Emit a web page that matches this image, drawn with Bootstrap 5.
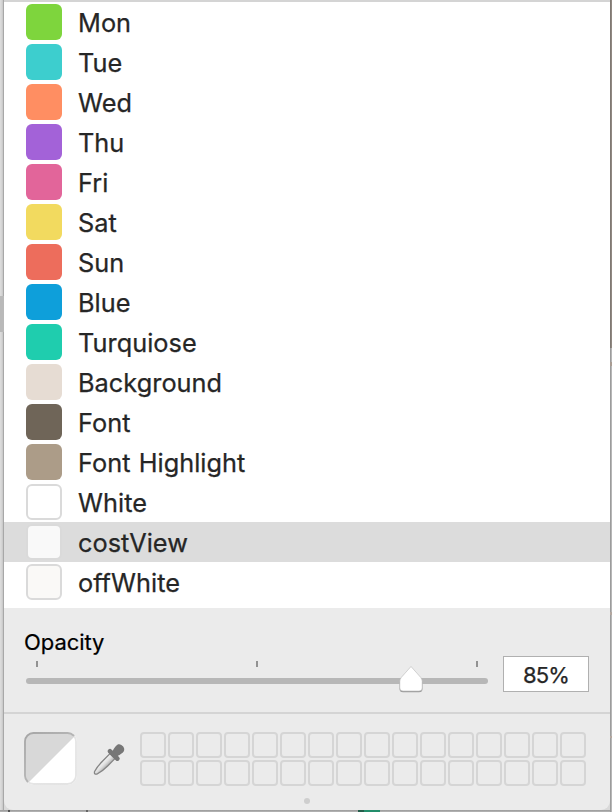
<!DOCTYPE html>
<html lang="en">
<head>
<meta charset="utf-8">
<meta name="viewport" content="width=device-width, initial-scale=1">
<title>Colors</title>
<link href="https://cdn.jsdelivr.net/npm/bootstrap@5.3.0/dist/css/bootstrap.min.css" rel="stylesheet">
<style>
html, body { height: 812px; overflow: hidden; }
body { width: 612px; background: #d9d9d9; font-family: Inter, "Open Sans", sans-serif; color: #262626; }
.desktop { height: 812px; padding: 0 2px 2px 4px;
  background:
    linear-gradient(#b9b9b9,#b9b9b9) 0 296px/4px 36px no-repeat,
    linear-gradient(#a99c92,#a99c92) 610px 362px/2px 4px no-repeat,
    linear-gradient(#b3a69e,#b3a69e) 610px 612px/2px 3px no-repeat,
    linear-gradient(#b3a69e,#b3a69e) 610px 736px/2px 2px no-repeat,
    linear-gradient(90deg,#77716c,#999189) 610px 0/2px 348px no-repeat,
    linear-gradient(90deg,#8f8f8f,#c4c4c4) 610px 348px/2px 464px no-repeat,
    linear-gradient(#555,#555) 8px 810px/2px 2px no-repeat,
    linear-gradient(#666,#666) 86px 810px/2px 2px no-repeat,
    linear-gradient(90deg,#245e4b 6px,#238d6b 6px) 358px 810px/22px 2px no-repeat,
    linear-gradient(#999,#b8b8b8) 0 810px/612px 2px no-repeat,
    linear-gradient(90deg,#dedede 0,#d2d2d2 2px,#c4c4c4 3px,#a8a8a8 3px,#a8a8a8 4px,transparent 4px);
}
.panel { height: 810px; background: #ebebeb; border-radius: 0 0 9px 9px; overflow: hidden; }
.color-list { height: 608px; background: #fff; border-top: 2px solid #d4d4d4; }
.color-row { height: 40px; padding-left: 22px; font-size: 25.3px; line-height: 40px; letter-spacing: .04px; word-spacing: 1px; }
.color-row.selected { background: #dcdcdc; }
.swatch { width: 36px; height: 36px; border-radius: 6px; margin-right: 16px; background: var(--c); }
.swatch.outlined { border: 2px solid #dadada; }
.color-name { position: relative; top: 1px; white-space: nowrap; -webkit-text-stroke: .25px currentColor; }
.opacity-area { height: 106px; padding: 19px 21px 0 20px; border-bottom: 2px solid #d4d4d4; }
.opacity-title { font-size: 22px; line-height: 30px; color: #000; letter-spacing: -.05px; -webkit-text-stroke: .2px currentColor; }
.slider { display: block; margin: -2px 0 0 0; }
.value-box { width: 86px; height: 36px; margin-top: -1px; background: #fff; border: 1px solid #b0b0b0; font-size: 22px; line-height: 36px; letter-spacing: -.8px; -webkit-text-stroke: .25px currentColor; }
.tools { height: 76px; padding: 18px 24px 0 18px; }
.tool-icons { width: 118px; height: 58px; }
.favorites { display: grid; grid-template-columns: repeat(16, 26px); gap: 2px; align-content: start; }
.favorites span { height: 26px; border: 2px solid #d5d5d5; border-radius: 4px; }
.handle { width: 6px; height: 6px; background: #cecece; margin: 8px auto 0; }
</style>
</head>
<body>
<div class="desktop">
<main class="panel">
  <div class="color-list">
    <div class="color-row d-flex align-items-center"><span class="swatch" style="--c:#7ed53d"></span><span class="color-name">Mon</span></div>
    <div class="color-row d-flex align-items-center"><span class="swatch" style="--c:#3dcece"></span><span class="color-name">Tue</span></div>
    <div class="color-row d-flex align-items-center"><span class="swatch" style="--c:#ff8e62"></span><span class="color-name">Wed</span></div>
    <div class="color-row d-flex align-items-center"><span class="swatch" style="--c:#a362d8"></span><span class="color-name">Thu</span></div>
    <div class="color-row d-flex align-items-center"><span class="swatch" style="--c:#e2659a"></span><span class="color-name">Fri</span></div>
    <div class="color-row d-flex align-items-center"><span class="swatch" style="--c:#f2da5f"></span><span class="color-name">Sat</span></div>
    <div class="color-row d-flex align-items-center"><span class="swatch" style="--c:#ed6d5c"></span><span class="color-name">Sun</span></div>
    <div class="color-row d-flex align-items-center"><span class="swatch" style="--c:#0e9fda"></span><span class="color-name">Blue</span></div>
    <div class="color-row d-flex align-items-center"><span class="swatch" style="--c:#1fcdae"></span><span class="color-name">Turquiose</span></div>
    <div class="color-row d-flex align-items-center"><span class="swatch" style="--c:#e6dcd3"></span><span class="color-name">Background</span></div>
    <div class="color-row d-flex align-items-center"><span class="swatch" style="--c:#6f6558"></span><span class="color-name">Font</span></div>
    <div class="color-row d-flex align-items-center"><span class="swatch" style="--c:#ac9c88"></span><span class="color-name">Font Highlight</span></div>
    <div class="color-row d-flex align-items-center"><span class="swatch outlined" style="--c:#ffffff"></span><span class="color-name">White</span></div>
    <div class="color-row selected d-flex align-items-center"><span class="swatch outlined" style="--c:#f9f9f9"></span><span class="color-name">costView</span></div>
    <div class="color-row d-flex align-items-center"><span class="swatch outlined" style="--c:#faf9f7"></span><span class="color-name">offWhite</span></div>
  </div>
  <section class="opacity-area">
    <div class="opacity-title">Opacity</div>
    <div class="d-flex justify-content-between">
      <svg class="slider" width="470" height="44" viewBox="24 655 470 44" role="img" aria-label="Opacity 85%">
        <path d="M36 661h2v6h-2zM256 661h2v6h-2zM476 661h2v6h-2z" fill="#929292"/>
        <rect x="26" y="678" width="462" height="6" rx="3" fill="#b7b7b7"/>
        <path d="M411 667L421 677.800Q422.500 679.500 422.500 681.500V688Q422.500 691.500 419 691.500H403Q399.500 691.500 399.500 688V681.500Q399.500 679.500 401 677.800Z" fill="#9b9b9b" transform="translate(0 .7)"/>
        <path d="M411 666.500L420.800 677.500Q422.200 679.500 422.200 681.500V688Q422.200 691 419 691H403Q399.800 691 399.800 688V681.500Q399.800 679.500 401.200 677.500Z" fill="#fff" stroke="#b9b9b9" stroke-width=".6"/>
      </svg>
      <div class="value-box text-center">85%</div>
    </div>
  </section>
  <section class="tools d-flex">
    <svg class="tool-icons flex-shrink-0" viewBox="22 732 118 58" aria-hidden="true">
      <defs>
        <clipPath id="well"><rect x="24" y="732" width="53" height="53" rx="9.500"/></clipPath>
        <linearGradient id="rim" x1="0" y1="0" x2="1" y2="1"><stop offset="0" stop-color="#a6a6a6"/><stop offset=".5" stop-color="#b5b5b5"/><stop offset=".52" stop-color="#e5e5e5"/><stop offset="1" stop-color="#e3e3e3"/></linearGradient>
        <linearGradient id="glass" x1="0" y1="0" x2="1" y2="0"><stop offset="0" stop-color="#f4f4f4"/><stop offset=".5" stop-color="#e0e0e0"/><stop offset="1" stop-color="#b0b0b0"/></linearGradient>
      </defs>
      <g clip-path="url(#well)">
        <path d="M24 732h53v53h-53z" fill="#fff"/>
        <path d="M24 732h53v2L26 785h-2z" fill="#d8d8d8"/>
      </g>
      <rect x="25" y="733" width="51" height="51" rx="8.500" fill="none" stroke="url(#rim)" stroke-width="1.800"/>
      <g transform="translate(94.800 773.800) rotate(45)">
        <path d="M-3.500 -25H3.500V-15C3.500 -9 2.800 -5 1.800 -1.500Q0 1.500 -1.800 -1.500C-2.800 -5 -3.500 -9 -3.500 -15Z" fill="url(#glass)" stroke="#858585" stroke-width="1.300"/>
        <path d="M-5.500 -29H-3.600C-4.400 -31.500 -5 -34 -4.600 -36.500C-3.500 -40.300 3.500 -40.300 4.600 -36.500C5 -34 4.400 -31.500 3.600 -29H5.500Q7.500 -29 7.500 -26.700T5.500 -24.400H-5.500Q-7.500 -24.400 -7.500 -26.700T-5.500 -29Z" fill="#777"/>
      </g>
    </svg>
    <div class="favorites">
      <span></span><span></span><span></span><span></span><span></span><span></span><span></span><span></span><span></span><span></span><span></span><span></span><span></span><span></span><span></span><span></span>
      <span></span><span></span><span></span><span></span><span></span><span></span><span></span><span></span><span></span><span></span><span></span><span></span><span></span><span></span><span></span><span></span>
    </div>
  </section>
  <div class="handle rounded-circle"></div>
</main>
</div>
<script src="https://cdn.jsdelivr.net/npm/bootstrap@5.3.0/dist/js/bootstrap.bundle.min.js"></script>
</body>
</html>
